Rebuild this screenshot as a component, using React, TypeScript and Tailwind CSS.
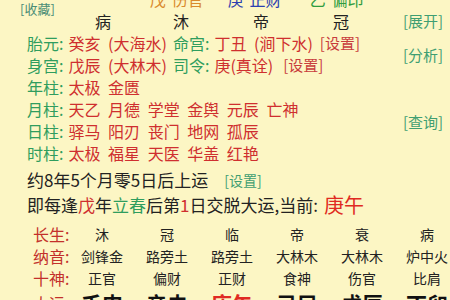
import React from "react";

const G = "text-[#2f9d5e]";
const R = "text-[#cf2f2f]";
const LINK = "text-[#3f9e72] text-[14px]";

function Row({ label, children }: { label: string; children: React.ReactNode }) {
  return (
    <div className="flex h-[22px] items-center whitespace-pre">
      <span className={G}>{label}:</span>
      <span className={`${R} ml-[5px]`}>{children}</span>
    </div>
  );
}

const cols = [
  ["长生", ["沐", "冠", "临", "帝", "衰", "病"]],
  ["纳音", ["剑锋金", "路旁土", "路旁土", "大林木", "大林木", "炉中火"]],
  ["十神", ["正官", "偏财", "正财", "食神", "伤官", "比肩"]],
] as const;

export default function App() {
  return (
    <div
      className="w-[450px] h-[300px] overflow-hidden bg-[#fcf6c4] text-[16px] text-[#222] [word-spacing:4px]"
      style={{ fontFamily: '"Noto Sans CJK SC", "Noto Sans", sans-serif' }}
    >
      {/* top cut row */}
      <div className="flex items-start h-[10px] whitespace-nowrap [word-spacing:2px]">
        <span className="ml-[20px] pt-[2px] text-[13px] leading-[14px] text-[#4a8d76]">[收藏]</span>
        <div className="flex -mt-[12px] ml-[95px] leading-[22px] text-[16px]">
          <span className="w-[78px] text-[#d98a2c]">戊 伤官</span>
          <span className="w-[82px] text-[#2b3fb0]">庚 正财</span>
          <span className="text-[#2f9d3e]">乙 偏印</span>
        </div>
      </div>
      <div className="flex">
        <div className="flex-1 pl-[27px]">
          <div className="flex h-[22px] items-center whitespace-nowrap pl-[68px]">
            <span className="w-[78px]">病</span>
            <span className="w-[80px]">沐</span>
            <span className="w-[80px]">帝</span>
            <span>冠</span>
          </div>
          <div className="flex h-[22px] items-center whitespace-pre">
            <div className="w-[146px] flex">
              <span className={G}>胎元:</span>
              <span className={`${R} ml-[5px]`}>癸亥 (大海水)</span>
            </div>
            <span className={G}>命宫:</span>
            <span className={`${R} ml-[5px]`}>丁丑 (涧下水)</span>
            <span className="ml-[7px] text-[15px] text-[#c83c3c]">[设置]</span>
          </div>
          <div className="flex h-[22px] items-center whitespace-pre">
            <div className="w-[146px] flex">
              <span className={G}>身宫:</span>
              <span className={`${R} ml-[5px]`}>戊辰 (大林木)</span>
            </div>
            <span className={G}>司令:</span>
            <span className={`${R} ml-[5px]`}>庚(真诠)</span>
            <span className="ml-[10px] text-[15px] text-[#c83c3c]">[设置]</span>
          </div>
          <Row label="年柱">太极 金匮</Row>
          <Row label="月柱">天乙 月德 学堂 金舆 元辰 亡神</Row>
          <Row label="日柱">驿马 阳刃 丧门 地网 孤辰</Row>
          <Row label="时柱">太极 福星 天医 华盖 红艳</Row>
          <div className="mt-[4px] flex h-[24px] items-center whitespace-nowrap text-[17px]">
            <span>约8年5个月零5日后上运</span>
            <span className={`${LINK} ml-[16px]`}>[设置]</span>
          </div>
          <div className="flex h-[26px] items-center whitespace-nowrap text-[17px]">
            <span>即每逢</span>
            <span className={R}>戊</span>
            <span>年</span>
            <span className={G}>立春</span>
            <span>后第</span>
            <span className={R}>1</span>
            <span>日交脱大运,当前:</span>
            <span className="ml-[6px] text-[20px] text-[#e02a22]">庚午</span>
          </div>
        </div>
        <div className="w-[47px] flex flex-col text-[#3f9e72] text-[15px] leading-[22px]">
          <span>[展开]</span>
          <span className="mt-[12px]">[分析]</span>
          <span className="mt-[45px]">[查询]</span>
        </div>
      </div>
      <div className="mt-[5px] pl-[33px] flex flex-col whitespace-nowrap">
        {cols.map(([label, vals]) => (
          <div key={label} className="flex h-[22px] items-center leading-[20px]">
            <span className="w-[52px] text-[#c3302b]">{label}:</span>
            {vals.map((v, i) => (
              <span key={i} className="w-[65px] shrink-0 text-center text-[14px] leading-[20px]">
                {v}
              </span>
            ))}
          </div>
        ))}
        <div className="mt-[2px] flex h-[24px] items-center leading-[24px]">
          <span className="w-[52px] text-[#c3302b]">大运:</span>
          {["壬申", "辛未", "庚午", "己巳", "戊辰", "丁卯"].map((v, i) => (
            <span
              key={i}
              className={`w-[65px] shrink-0 text-center text-[21px] leading-[24px] font-bold ${i === 2 ? "text-[#e02a22]" : "text-[#111]"}`}
            >
              {v}
            </span>
          ))}
        </div>
      </div>
    </div>
  );
}
